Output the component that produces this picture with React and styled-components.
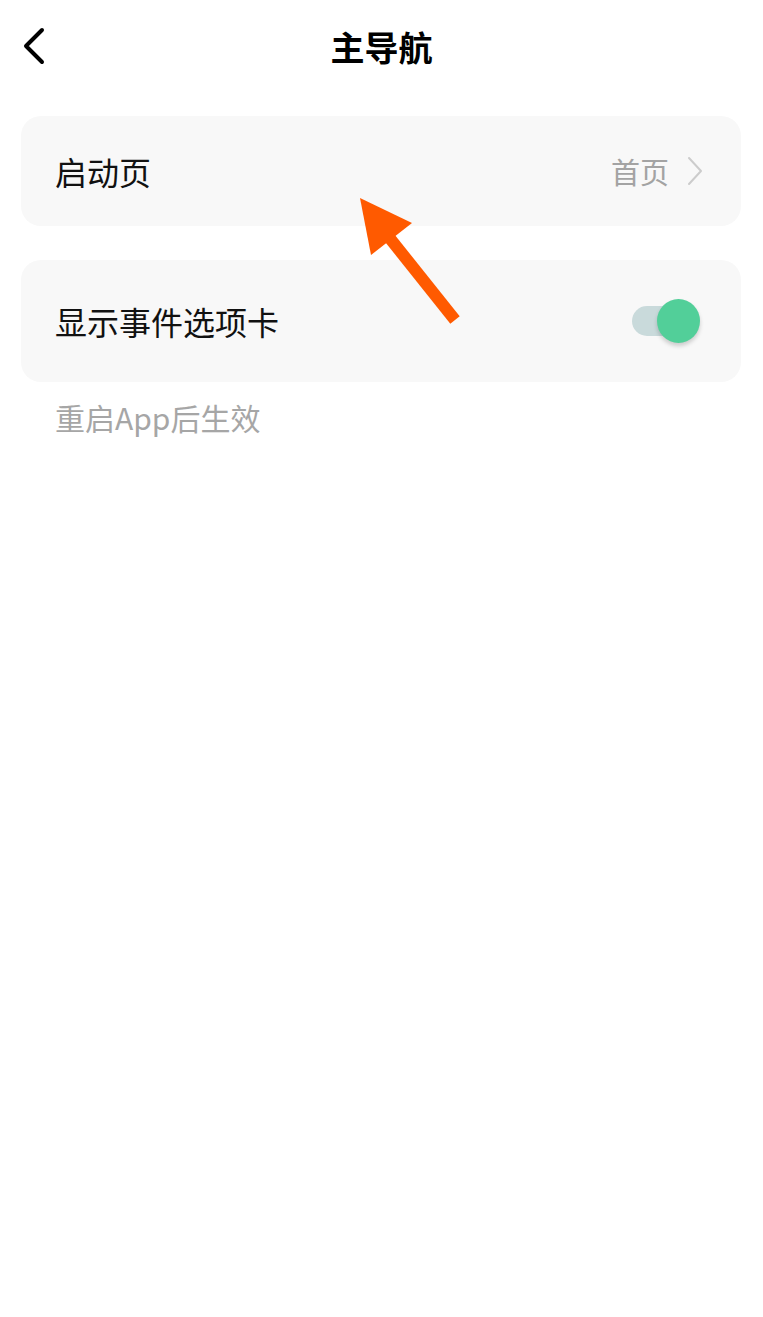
import React, { useState } from 'react';
import styled, { createGlobalStyle } from 'styled-components';

const GlobalStyle = createGlobalStyle`
    html, body {
        margin: 0;
        padding: 0;
        background: #ffffff;
    }
    body {
        font-family: "Noto Sans CJK SC", "Noto Sans", sans-serif;
        color: #111111;
    }
`

const Page = styled.div`
    position: relative;
    width: 763px;
    min-height: 1317px;
    background: #ffffff;
`

const Header = styled.div`
    display: flex;
    align-items: center;
    justify-content: center;
    position: relative;
    height: 94px;
`

const BackButton = styled.button`
    position: absolute;
    left: 14px;
    top: 22px;
    width: 40px;
    height: 48px;
    border: none;
    background: none;
    padding: 0;
    display: flex;
    align-items: center;
    justify-content: center;
`

const Title = styled.h1`
    margin: 0;
    font-size: 34px;
    font-weight: 700;
    line-height: 1;
    color: #000000;
`

const Content = styled.div`
    display: flex;
    flex-direction: column;
    padding: 22px 22px 0 21px;
`

const Card = styled.div`
    display: flex;
    align-items: center;
    justify-content: space-between;
    height: ${props => props.$height}px;
    margin-top: ${props => props.$gap || 0}px;
    padding: 0 38px 0 34px;
    background: #f8f8f8;
    border-radius: 20px;
`

const Label = styled.span`
    font-size: 32px;
    line-height: 1;
    color: #111111;
`

const ValueGroup = styled.div`
    display: flex;
    align-items: center;
    gap: 18px;
`

const Value = styled.span`
    font-size: 29px;
    line-height: 1;
    color: #a3a3a3;
`

const Note = styled.div`
    padding: 17px 0 0 34px;
    font-size: 30px;
    line-height: 1.2;
    color: #a6a6a6;
`

const Track = styled.button`
    position: relative;
    width: 68px;
    height: 44px;
    margin-right: 3px;
    border: none;
    background: none;
    padding: 0;

    &::before {
        content: '';
        position: absolute;
        left: 0;
        top: 7px;
        width: 60px;
        height: 30px;
        border-radius: 15px;
        background: ${props => (props.$on ? '#c9dadb' : '#dddddd')};
    }
`

const Knob = styled.span`
    position: absolute;
    top: 0;
    left: ${props => (props.$on ? '25px' : '0')};
    width: 43px;
    height: 44px;
    border-radius: 50%;
    background: ${props => (props.$on ? '#52cf99' : '#ffffff')};
    box-shadow: 0 3px 4px rgba(0, 0, 0, 0.18);
`

const Annotation = styled.svg`
    position: absolute;
    left: 0;
    top: 0;
    pointer-events: none;
`

const Switch = ({ on, onToggle }) => (
    <Track $on={on} onClick={onToggle}>
        <Knob $on={on} />
    </Track>
)

const App = () => {
    const [showEvents, setShowEvents] = useState(true);
    return (
        <Page>
            <GlobalStyle />
            <Header>
                <BackButton>
                    <svg width="24" height="38" viewBox="0 0 24 38">
                        <path d="M20 3 L4 19 L20 35" fill="none" stroke="#000" strokeWidth="4" strokeLinecap="round" strokeLinejoin="round" />
                    </svg>
                </BackButton>
                <Title>主导航</Title>
            </Header>
            <Content>
                <Card $height={110}>
                    <Label>启动页</Label>
                    <ValueGroup>
                        <Value>首页</Value>
                        <svg width="16" height="30" viewBox="0 0 16 30">
                            <path d="M2 2 L14 15 L2 28" fill="none" stroke="#cccccc" strokeWidth="2" strokeLinecap="round" strokeLinejoin="round" />
                        </svg>
                    </ValueGroup>
                </Card>
                <Card $height={122} $gap={34}>
                    <Label>显示事件选项卡</Label>
                    <Switch on={showEvents} onToggle={() => setShowEvents(!showEvents)} />
                </Card>
                <Note>重启App后生效</Note>
            </Content>
            {/* orange pointer drawn over the screen */}
            <Annotation width="763" height="400" viewBox="0 0 763 400">
                <polygon points="360,198 412,223 371,255" fill="#ff5a00" />
                <line x1="388" y1="236" x2="455" y2="320" stroke="#ff5a00" strokeWidth="12" />
            </Annotation>
        </Page>
    );
};

export default App;
